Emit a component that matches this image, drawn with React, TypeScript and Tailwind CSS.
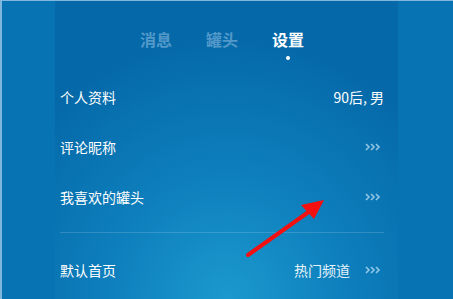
import { ReactNode } from "react";

function Chevrons() {
  return (
    <svg width="16" height="8" viewBox="0 0 16 8" className="shrink-0 mr-[3px]" fill="none" stroke="rgba(190,225,245,0.75)" strokeWidth={1.6}>
      <polyline points="1,1 4,4 1,7" />
      <polyline points="6,1 9,4 6,7" />
      <polyline points="11,1 14,4 11,7" />
    </svg>
  );
}

function Row({ label, right, chevron = true }: { label: string; right?: ReactNode; chevron?: boolean }) {
  return (
    <div className="h-[50px] flex items-center justify-between">
      <span className="text-[14px] text-white">{label}</span>
      <div className="flex items-center gap-[15px]">
        {right}
        {chevron && <Chevrons />}
      </div>
    </div>
  );
}

export default function App() {
  return (
    <div
      className="relative w-[453px] h-[299px] overflow-hidden bg-[#0873b2] border-l-2 border-t border-[#7fb8dc]"
      style={{ fontFamily: '"Noto Sans CJK SC", "Noto Sans", sans-serif' }}
    >
      <div className="ml-[53px] w-[343px] h-full bg-[radial-gradient(ellipse_75%_90%_at_50%_100%,#1c98ce_0%,#0e80bd_45%,#0568a8_100%)] pl-[5px] pr-[14px]">
        {/* Tabs */}
        <div className="h-[71px] flex pl-[80px] gap-[34px] pt-[27px]">
          <span className="text-[16px] font-bold text-[#5299ca] leading-[22px]">消息</span>
          <span className="text-[16px] font-bold text-[#5299ca] leading-[22px]">罐头</span>
          <div className="flex flex-col items-center">
            <span className="text-[16px] font-bold text-white leading-[22px]">设置</span>
            <span className="mt-[6px] w-[4px] h-[4px] rounded-full bg-white" />
          </div>
        </div>

        <Row label="个人资料" chevron={false} right={<span className="text-[14px] text-white">90后, 男</span>} />
        <Row label="评论昵称" />
        <Row label="我喜欢的罐头" />

        <div className="mt-[10px] h-px bg-white/15" />

        <div className="mt-[12px]">
          <Row label="默认首页" right={<span className="text-[14px] text-white/90">热门频道</span>} />
        </div>
      </div>

      {/* annotation arrow */}
      <svg className="absolute left-0 top-0 pointer-events-none" width="453" height="299" viewBox="0 0 453 299">
        <line x1="246" y1="254" x2="308" y2="210" stroke="#f21010" strokeWidth="4" strokeLinecap="round" />
        <polygon points="322,199 312,218 299,204" fill="#f21010" />
      </svg>
    </div>
  );
}
